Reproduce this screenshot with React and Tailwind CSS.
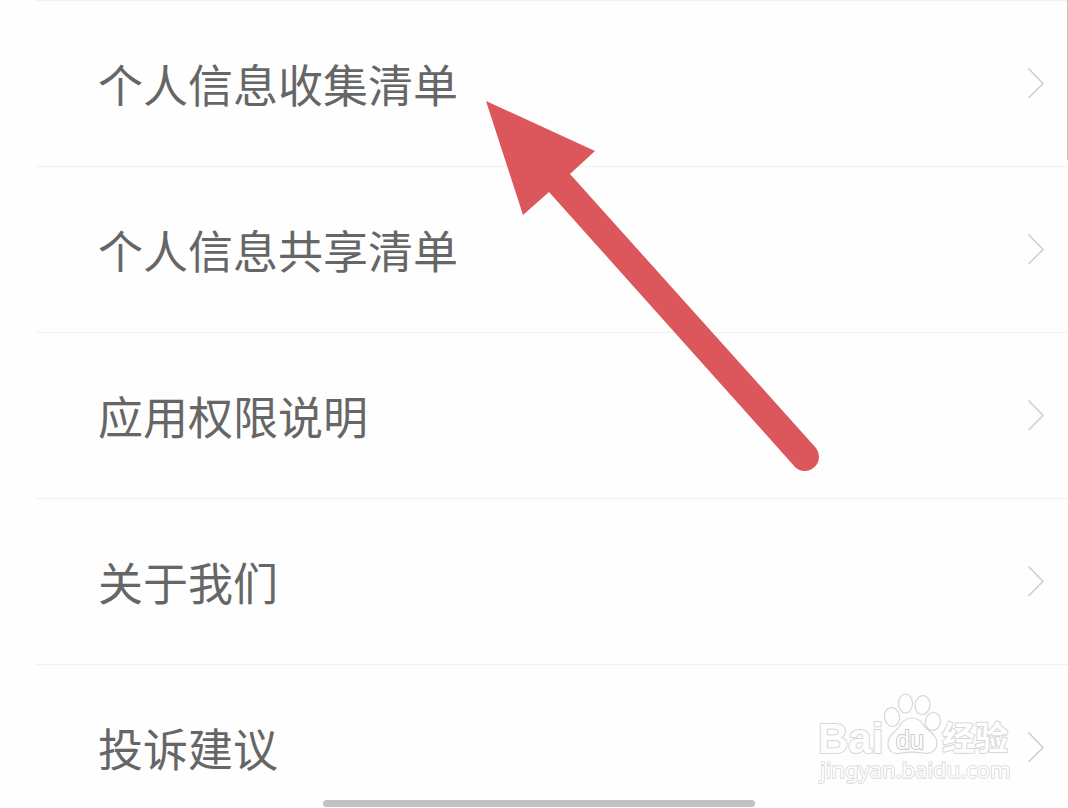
const items = [
  { id: "collect", label: "个人信息收集清单" },
  { id: "share", label: "个人信息共享清单" },
  { id: "permissions", label: "应用权限说明" },
  { id: "about", label: "关于我们" },
  { id: "feedback", label: "投诉建议" },
];

function Chevron() {
  return (
    <svg className="w-5 h-9 shrink-0" viewBox="0 0 20 36" fill="none" aria-hidden="true">
      <path d="M3.500 2.500 L18 17.500 L3.500 32" stroke="#cfcfcf" strokeWidth="1.6" />
    </svg>
  );
}

function Arrow() {
  return (
    <svg
      className="absolute left-[486px] top-[101px] w-[336px] h-[372px] pointer-events-none"
      viewBox="0 0 336 372"
      aria-hidden="true"
    >
      <path
        d="M0 0 L109 50 L84 73 L330 347 A14.2 14.2 0 0 1 309 366 L63 91 L37 114 Z"
        fill="#dc575c"
      />
    </svg>
  );
}

function Watermark() {
  return (
    <svg
      className="absolute right-[54px] bottom-[18px] w-[200px] h-[100px] pointer-events-none"
      viewBox="0 0 200 100"
      fill="#fefefe"
      stroke="#d6d6d6"
      strokeWidth="2"
      strokeLinejoin="round"
      role="img"
      aria-label="Baidu 经验"
    >
      <text
        x="4"
        y="63"
        fontSize="42"
        className="font-['Liberation_Sans',sans-serif] font-bold [paint-order:stroke]"
      >
        Bai
      </text>
      {/* paw */}
      <g strokeWidth="1.2">
        <ellipse cx="78" cy="27" rx="7.5" ry="9.5" transform="rotate(-8 78 27)" />
        <ellipse cx="91.500" cy="13.500" rx="7" ry="9.500" />
        <ellipse cx="108.500" cy="15" rx="7.500" ry="9.500" transform="rotate(8 108 15)" />
        <ellipse cx="119" cy="31.500" rx="7.500" ry="9" transform="rotate(10 119 31)" />
        <path d="M98 28 C91 28 88 32 85 37 C81 42 74 45 74 54 C74 61 80 65 87 63 C94 62 102 62 109 63 C117 65 123 60 123 53 C123 45 115 42 111 37 C108 32 105 28 98 28 Z" />
      </g>
      <text
        x="82"
        y="59"
        fontSize="25"
        stroke="#cacaca"
        className="font-['Liberation_Sans',sans-serif] [paint-order:stroke]"
      >
        du
      </text>
      <text
        x="128"
        y="60"
        fontSize="33"
        className="font-['Noto_Sans_CJK_SC',sans-serif] font-bold [paint-order:stroke]"
      >
        经验
      </text>
      <text
        x="6"
        y="88"
        fontSize="22"
        strokeWidth="1.6"
        className="font-['Noto_Sans',sans-serif] [paint-order:stroke]"
      >
        jingyan.baidu.com
      </text>
    </svg>
  );
}

export default function App() {
  return (
    <div className="relative h-screen overflow-hidden bg-[#fefefe] font-['Noto_Sans_CJK_SC',sans-serif]">
      <ul className="pl-9">
        {items.map((item) => (
          <li key={item.id} className="border-t border-[#f0f0f0]">
            <a
              href={`#${item.id}`}
              className="flex items-center justify-between h-[165px] pl-[62px] pr-[23px]"
            >
              <span className="text-[45px] leading-[60px] text-[#666]">{item.label}</span>
              <Chevron />
            </a>
          </li>
        ))}
      </ul>

      <Arrow />
      <Watermark />

      {/* scroll thumb */}
      <div className="absolute right-0 top-0 w-px h-40 bg-[#c4c4c4]" />

      {/* home indicator */}
      <div className="absolute inset-x-0 bottom-px flex justify-center pl-2.5">
        <div className="w-[432px] h-[7px] rounded-full bg-[#c2c2c2]" />
      </div>
    </div>
  );
}
